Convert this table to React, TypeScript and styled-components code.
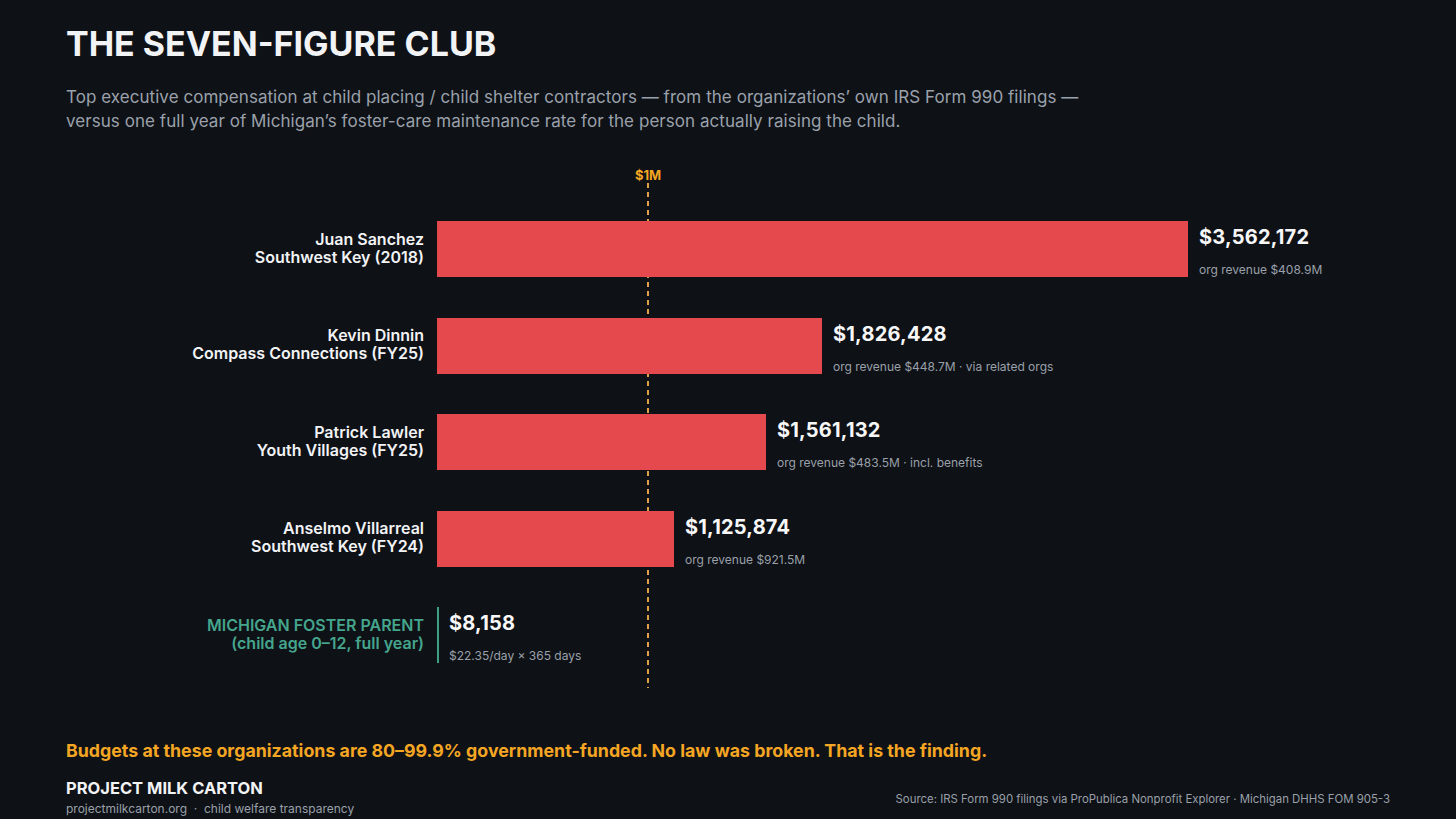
import styled, { createGlobalStyle } from 'styled-components';

const GlobalStyle = createGlobalStyle`
  html, body {
    margin: 0;
    padding: 0;
    background: #0e1116;
  }
  body {
    font-family: Inter, "Noto Sans", "Liberation Sans", sans-serif;
    color: #f2f3f5;
  }
`;

const MAX_VALUE = 3562172;
const MAX_WIDTH = 751;
const LABEL_WIDTH = 358;
const LABEL_GAP = 13;

interface Row {
  name: string;
  org: string;
  value: number;
  display: string;
  note: string;
}

const rows: Row[] = [
  { name: 'Juan Sanchez', org: 'Southwest Key (2018)', value: 3562172, display: '$3,562,172', note: 'org revenue $408.9M' },
  { name: 'Kevin Dinnin', org: 'Compass Connections (FY25)', value: 1826428, display: '$1,826,428', note: 'org revenue $448.7M · via related orgs' },
  { name: 'Patrick Lawler', org: 'Youth Villages (FY25)', value: 1561132, display: '$1,561,132', note: 'org revenue $483.5M · incl. benefits' },
  { name: 'Anselmo Villarreal', org: 'Southwest Key (FY24)', value: 1125874, display: '$1,125,874', note: 'org revenue $921.5M' },
];

const Page = styled.div`
  width: 1456px;
  height: 819px;
  box-sizing: border-box;
  padding: 24px 66px 0;
  display: flex;
  flex-direction: column;
  overflow: hidden;
`;

const Title = styled.h1`
  margin: 0;
  font-size: 34px;
  line-height: 40px;
  font-weight: 700;
  color: #f2f3f5;
`;

const Subtitle = styled.p`
  margin: 21px 0 0;
  font-size: 17px;
  line-height: 24px;
  font-weight: 400;
  color: #9ba1ab;
  letter-spacing: 0.05px;
`;

const Chart = styled.div`
  position: relative;
  margin-top: 34px;
  padding: 54px 0 25px;
  display: flex;
  flex-direction: column;
  gap: 40.5px;
`;

const Marker = styled.div<{ $left: number }>`
  position: absolute;
  top: 0;
  bottom: 0;
  left: ${({ $left }) => $left}px;
  width: 0;
  display: flex;
  flex-direction: column;
  align-items: center;
  z-index: 0;
`;

const MarkerLabel = styled.span`
  font-size: 13px;
  line-height: 16px;
  font-weight: 700;
  color: #f5a623;
  white-space: nowrap;
`;

const MarkerLine = styled.div`
  flex: 1;
  width: 2px;
  background: repeating-linear-gradient(
    to bottom,
    #e0a048 0,
    #e0a048 5px,
    transparent 5px,
    transparent 9px
  );
`;

const RowLine = styled.div`
  position: relative;
  z-index: 1;
  display: grid;
  grid-template-columns: ${LABEL_WIDTH}px 1fr;
  column-gap: ${LABEL_GAP}px;
  align-items: center;
  height: 56px;
`;

const Label = styled.div<{ $accent?: boolean }>`
  text-align: right;
  font-size: 16px;
  line-height: 18px;
  font-weight: 600;
  color: ${({ $accent }) => ($accent ? '#45a58d' : '#f2f3f5')};
  margin-top: -3px;
`;

const Track = styled.div`
  display: flex;
  align-items: stretch;
  height: 56px;
`;

const Bar = styled.div`
  background: #e5484d;
  height: 56px;
  flex: none;
`;

const Rule = styled.div`
  width: 2px;
  background: #3c9f86;
  height: 56px;
  flex: none;
`;

const Values = styled.div<{ $gap: number }>`
  display: flex;
  flex-direction: column;
  margin-left: ${({ $gap }) => $gap}px;
`;

const Amount = styled.span`
  font-size: 20px;
  line-height: 32px;
  font-weight: 700;
  color: #f7f7f8;
  letter-spacing: 0.2px;
`;

const Note = styled.span`
  margin-top: 9px;
  font-size: 12px;
  line-height: 16px;
  color: #9aa0a9;
`;

const Finding = styled.p`
  margin: 51px 0 0;
  font-size: 17.8px;
  line-height: 24px;
  font-weight: 700;
  color: #f5a623;
`;

const Footer = styled.div`
  margin-top: 14px;
  display: flex;
  justify-content: space-between;
  align-items: center;
`;

const Brand = styled.div`
  display: flex;
  flex-direction: column;
`;

const BrandName = styled.span`
  font-size: 16.5px;
  line-height: 22px;
  font-weight: 700;
  color: #f2f3f5;
`;

const BrandSub = styled.span`
  margin-top: 2px;
  font-size: 12px;
  line-height: 16px;
  color: #9aa0a9;
  white-space: pre;
`;

const Source = styled.span`
  margin-top: 4px;
  font-size: 11.4px;
  line-height: 16px;
  color: #9aa0a9;
`;

export default function App() {
  const scale = MAX_WIDTH / MAX_VALUE;
  return (
    <>
      <GlobalStyle />
      <Page>
        <Title>THE SEVEN-FIGURE CLUB</Title>
        <Subtitle>
          Top executive compensation at child placing / child shelter contractors — from the organizations’ own IRS Form 990 filings —
          <br />
          versus one full year of Michigan’s foster-care maintenance rate for the person actually raising the child.
        </Subtitle>

        <Chart>
          <Marker $left={LABEL_WIDTH + LABEL_GAP + Math.round(1000000 * scale)}>
            <MarkerLabel>$1M</MarkerLabel>
            <MarkerLine />
          </Marker>

          {rows.map((r) => (
            <RowLine key={r.name}>
              <Label>
                {r.name}
                <br />
                {r.org}
              </Label>
              <Track>
                <Bar style={{ width: Math.round(r.value * scale) }} />
                <Values $gap={11}>
                  <Amount>{r.display}</Amount>
                  <Note>{r.note}</Note>
                </Values>
              </Track>
            </RowLine>
          ))}

          <RowLine>
            <Label $accent>
              MICHIGAN FOSTER PARENT
              <br />
              (child age 0–12, full year)
            </Label>
            <Track>
              <Rule />
              <Values $gap={10}>
                <Amount>$8,158</Amount>
                <Note>$22.35/day × 365 days</Note>
              </Values>
            </Track>
          </RowLine>
        </Chart>

        <Finding>
          Budgets at these organizations are 80–99.9% government-funded. No law was broken. That is the finding.
        </Finding>

        <Footer>
          <Brand>
            <BrandName>PROJECT MILK CARTON</BrandName>
            <BrandSub>{'projectmilkcarton.org  ·  child welfare transparency'}</BrandSub>
          </Brand>
          <Source>Source: IRS Form 990 filings via ProPublica Nonprofit Explorer · Michigan DHHS FOM 905-3</Source>
        </Footer>
      </Page>
    </>
  );
}
